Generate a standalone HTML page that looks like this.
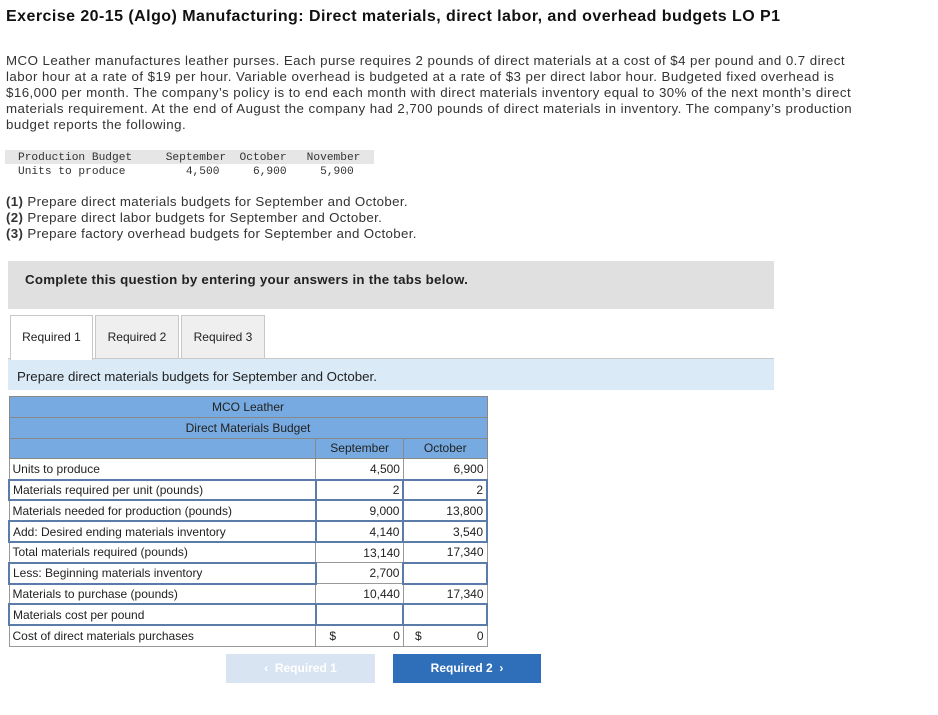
<!DOCTYPE html>
<html><head><meta charset="utf-8"><style>
*{margin:0;padding:0;box-sizing:border-box}
body{width:938px;height:715px;background:#fff;font-family:"Liberation Sans",Arial,sans-serif;color:#222;position:relative;overflow:hidden}
.a{position:absolute}
h1{position:absolute;left:6px;top:8px;font-size:16px;letter-spacing:0.45px;font-weight:bold;color:#111;white-space:nowrap}
.p{left:6px;top:53px;width:860px;font-size:13.3px;letter-spacing:0.45px;line-height:16px;color:#333}
.mono{font-family:"Liberation Mono",monospace;font-size:11.2px;color:#333}
.q{left:6px;top:194px;font-size:13.3px;letter-spacing:0.35px;line-height:16px;color:#333}
.gray{left:8px;top:261px;width:766px;height:48px;background:#e0e0e0;font-weight:bold;font-size:13.3px;letter-spacing:0.25px;padding:11px 0 0 17px;line-height:16px}
.tab{top:315px;height:44px;border:1px solid #c8c8c8;background:#efefef;font-size:12px;line-height:42px;text-align:center}
.blue{left:8px;top:358px;width:766px;height:32px;background:#daeaf7;border-top:1px solid #c8c8c8;font-size:13.3px;padding:10px 0 0 9px}
table{position:absolute;left:8px;top:396px;border-collapse:collapse;font-size:12px;width:480px}
td{height:20.8px;border:1px solid #999;padding:0 3px;white-space:nowrap}
.h td{background:#76aae0;text-align:center;border-color:#888}
.n{text-align:right}
.in{border:2px solid #5b7ca8}
.btn{top:654px;height:29px;font-size:12px;font-weight:bold;text-align:center;line-height:29px;color:#fff}
</style></head><body>
<h1>Exercise 20-15 (Algo) Manufacturing: Direct materials, direct labor, and overhead budgets LO P1</h1>
<div class="a p">MCO Leather manufactures leather purses. Each purse requires 2 pounds of direct materials at a cost of $4 per pound and 0.7 direct labor hour at a rate of $19 per hour. Variable overhead is budgeted at a rate of $3 per direct labor hour. Budgeted fixed overhead is $16,000 per month. The company’s policy is to end each month with direct materials inventory equal to 30% of the next month’s direct materials requirement. At the end of August the company had 2,700 pounds of direct materials in inventory. The company’s production budget reports the following.</div>
<div class="a" style="left:5px;top:150px;width:369px;height:14px;background:#e6e6e6"></div>
<div class="a mono" style="left:18px;top:151px;line-height:14px;white-space:pre">Production Budget     September  October   November
Units to produce         4,500     6,900     5,900</div>
<div class="a q"><b>(1)</b> Prepare direct materials budgets for September and October.<br><b>(2)</b> Prepare direct labor budgets for September and October.<br><b>(3)</b> Prepare factory overhead budgets for September and October.</div>
<div class="a gray">Complete this question by entering your answers in the tabs below.</div>
<div class="a blue">Prepare direct materials budgets for September and October.</div>
<div class="a tab" style="left:10px;width:83px;background:#fff;border-bottom:none;height:45px;z-index:2">Required 1</div>
<div class="a tab" style="left:95px;width:84px">Required 2</div>
<div class="a tab" style="left:181px;width:84px">Required 3</div>
<table>
<colgroup><col style="width:308px"><col style="width:88px"><col style="width:84px"></colgroup>
<tr class="h"><td colspan="3">MCO Leather</td></tr>
<tr class="h"><td colspan="3">Direct Materials Budget</td></tr>
<tr class="h"><td></td><td>September</td><td>October</td></tr>
<tr><td>Units to produce</td><td class="n">4,500</td><td class="n">6,900</td></tr>
<tr><td class="in">Materials required per unit (pounds)</td><td class="n in">2</td><td class="n in">2</td></tr>
<tr><td>Materials needed for production (pounds)</td><td class="n in">9,000</td><td class="n in">13,800</td></tr>
<tr><td class="in">Add: Desired ending materials inventory</td><td class="n in">4,140</td><td class="n in">3,540</td></tr>
<tr><td>Total materials required (pounds)</td><td class="n">13,140</td><td class="n">17,340</td></tr>
<tr><td class="in">Less: Beginning materials inventory</td><td class="n" style="border:1px dotted #5b7ca8">2,700</td><td class="in"></td></tr>
<tr><td>Materials to purchase (pounds)</td><td class="n">10,440</td><td class="n">17,340</td></tr>
<tr><td class="in">Materials cost per pound</td><td class="in"></td><td class="in"></td></tr>
<tr><td>Cost of direct materials purchases</td><td class="n"><span style="float:left;padding-left:10px">$</span>0</td><td class="n"><span style="float:left;padding-left:8px">$</span>0</td></tr>
</table>
<div class="a btn" style="left:226px;width:149px;background:#d8e4f2;color:#fff">&lsaquo;&nbsp; Required 1</div>
<div class="a btn" style="left:393px;width:148px;background:#2f6fba">Required 2 &nbsp;&rsaquo;</div>
</body></html>
